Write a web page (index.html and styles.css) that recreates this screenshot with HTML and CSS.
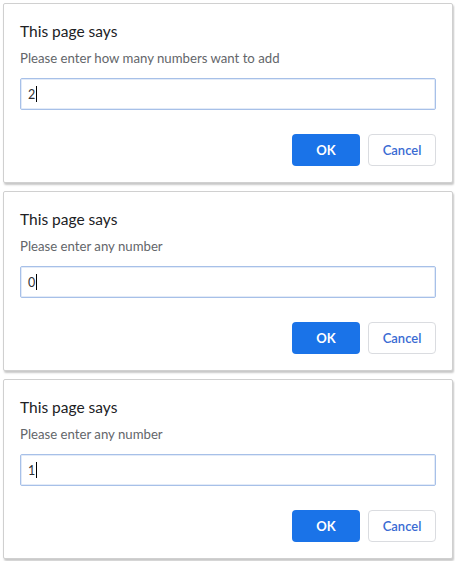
FILE: index.html
```html
<!DOCTYPE html>
<html>
<head>
<meta charset="utf-8">
<link rel="stylesheet" href="styles.css">
</head>
<body>
<div class="stack">
  <div class="dialog">
    <div class="title">This page says</div>
    <div class="message">Please enter how many numbers want to add</div>
    <div class="field"><span class="value">2</span><span class="caret"></span></div>
    <div class="actions">
      <button class="btn ok">OK</button>
      <button class="btn cancel">Cancel</button>
    </div>
  </div>
  <div class="dialog">
    <div class="title">This page says</div>
    <div class="message">Please enter any number</div>
    <div class="field"><span class="value">0</span><span class="caret"></span></div>
    <div class="actions">
      <button class="btn ok">OK</button>
      <button class="btn cancel">Cancel</button>
    </div>
  </div>
  <div class="dialog">
    <div class="title">This page says</div>
    <div class="message">Please enter any number</div>
    <div class="field"><span class="value">1</span><span class="caret"></span></div>
    <div class="actions">
      <button class="btn ok">OK</button>
      <button class="btn cancel">Cancel</button>
    </div>
  </div>
</div>
</body>
</html>
```
FILE: styles.css
```css
html, body {
  margin: 0;
  padding: 0;
  background: #ffffff;
}
body {
  font-family: "Lato", "Noto Sans", "DejaVu Sans", sans-serif;
  width: 455px;
  height: 561px;
  overflow: hidden;
}
.stack {
  display: flex;
  flex-direction: column;
  gap: 8px;
  padding: 3px 0 0 3px;
}
.dialog {
  box-sizing: border-box;
  width: 450px;
  height: 180px;
  background: #ffffff;
  border: 1px solid #d0d0d0;
  border-radius: 2px;
  box-shadow: 1px 2px 2px rgba(0, 0, 0, 0.22);
  padding: 17px 15px 0 16px;
  display: flex;
  flex-direction: column;
}
.title {
  font-size: 15.5px;
  line-height: 20px;
  color: #202124;
}
.message {
  margin-top: 9px;
  font-size: 13.2px;
  line-height: 16px;
  color: #63666a;
}
.field {
  box-sizing: border-box;
  margin-top: 12px;
  height: 32px;
  width: 416px;
  border: 1px solid #a7c0e8;
  border-radius: 2px;
  box-shadow: inset 0 0 0 1px #e3ebf8;
  display: flex;
  align-items: center;
  padding-left: 7px;
  font-size: 12.5px;
  color: #303134;
}
.caret {
  display: inline-block;
  width: 1px;
  height: 16px;
  background: #000000;
  margin-left: 1px;
}
.actions {
  margin-top: 24px;
  display: flex;
  justify-content: flex-end;
  gap: 8px;
  padding-right: 1px;
}
.btn {
  box-sizing: border-box;
  width: 68px;
  height: 32px;
  border-radius: 4px;
  font-family: "Lato", "Noto Sans", sans-serif;
  font-size: 13px;
  font-weight: bold;
  padding: 0;
}
.ok {
  background: #1a73e8;
  color: #ffffff;
  border: none;
}
.cancel {
  background: #ffffff;
  color: #3a6bd3;
  border: 1px solid #dadce0;
  font-weight: 600;
}
```
